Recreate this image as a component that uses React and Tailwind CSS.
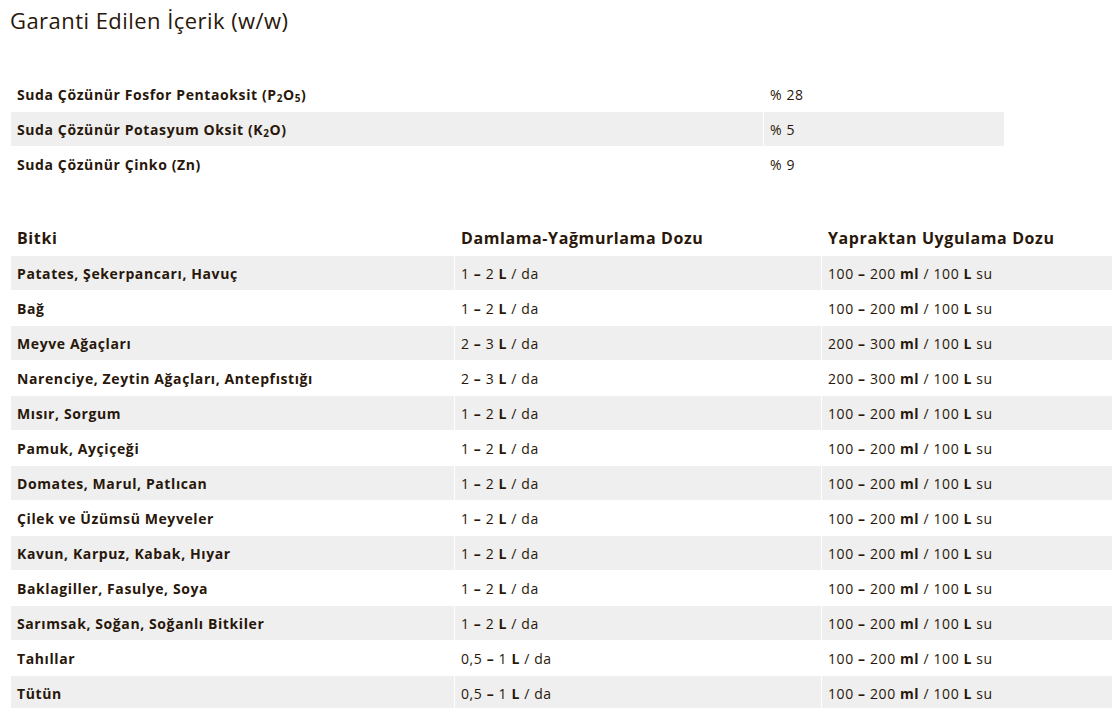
const COMPOSITION = [
  { name: <>Suda Çözünür Fosfor Pentaoksit (P<sub>2</sub>O<sub>5</sub>)</>, value: '% 28' },
  { name: <>Suda Çözünür Potasyum Oksit (K<sub>2</sub>O)</>, value: '% 5' },
  { name: <>Suda Çözünür Çinko (Zn)</>, value: '% 9' },
];

const DOSES = [
  ['Patates, Şekerpancarı, Havuç', '1 – 2', '100 – 200'],
  ['Bağ', '1 – 2', '100 – 200'],
  ['Meyve Ağaçları', '2 – 3', '200 – 300'],
  ['Narenciye, Zeytin Ağaçları, Antepfıstığı', '2 – 3', '200 – 300'],
  ['Mısır, Sorgum', '1 – 2', '100 – 200'],
  ['Pamuk, Ayçiçeği', '1 – 2', '100 – 200'],
  ['Domates, Marul, Patlıcan', '1 – 2', '100 – 200'],
  ['Çilek ve Üzümsü Meyveler', '1 – 2', '100 – 200'],
  ['Kavun, Karpuz, Kabak, Hıyar', '1 – 2', '100 – 200'],
  ['Baklagiller, Fasulye, Soya', '1 – 2', '100 – 200'],
  ['Sarımsak, Soğan, Soğanlı Bitkiler', '1 – 2', '100 – 200'],
  ['Tahıllar', '0,5 – 1', '100 – 200'],
  ['Tütün', '0,5 – 1', '100 – 200'],
];

function Range({ text }) {
  const [a, b] = text.split(' – ');
  return (
    <>
      {a} <b className="font-bold">–</b> {b}
    </>
  );
}

export default function App() {
  return (
    <div
      className="overflow-hidden bg-white text-[#28170a] px-[10px] h-[708px]"
      style={{ fontFamily: '"Open Sans", "Noto Sans", sans-serif' }}
    >
      <h2 className="text-[22px] font-normal leading-[30px] pt-[5px] tracking-[0.45px]">Garanti Edilen İçerik (w/w)</h2>

      <table className="mt-[41px] w-[995px] border-separate border-spacing-[1px] text-[14px] tracking-[0.6px]">
        <tbody>
          {COMPOSITION.map((row, i) => (
            <tr key={i} className={i % 2 === 1 ? 'bg-[#efefef]' : ''}>
              <td className="h-[34px] w-[752px] px-[6px] py-0 font-bold align-middle [&_sub]:text-[10px] [&_sub]:bottom-[-0.2em]">
                {row.name}
              </td>
              <td className="h-[34px] px-[6px] py-0 align-middle">{row.value}</td>
            </tr>
          ))}
        </tbody>
      </table>

      <table className="mt-[38px] w-[1104px] border-separate border-spacing-[1px] text-[14px] tracking-[0.6px]">
        <thead>
          <tr>
            <th className="h-[34px] w-[443px] px-[6px] text-left text-[16px] font-bold">Bitki</th>
            <th className="h-[34px] w-[366px] px-[6px] text-left text-[16px] font-bold">Damlama-Yağmurlama Dozu</th>
            <th className="h-[34px] px-[6px] text-left text-[16px] font-bold">Yapraktan Uygulama Dozu</th>
          </tr>
        </thead>
        <tbody>
          {DOSES.map(([plant, drip, leaf], i) => (
            <tr key={plant} className={i % 2 === 0 ? 'bg-[#efefef]' : ''}>
              <td className="h-[34px] px-[6px] font-bold">{plant}</td>
              <td className="h-[34px] px-[6px]">
                <Range text={drip} /> <b className="font-bold">L</b> / da
              </td>
              <td className="h-[34px] px-[6px]">
                <Range text={leaf} /> <b className="font-bold">ml</b> / 100 <b className="font-bold">L</b> su
              </td>
            </tr>
          ))}
        </tbody>
      </table>
    </div>
  );
}
